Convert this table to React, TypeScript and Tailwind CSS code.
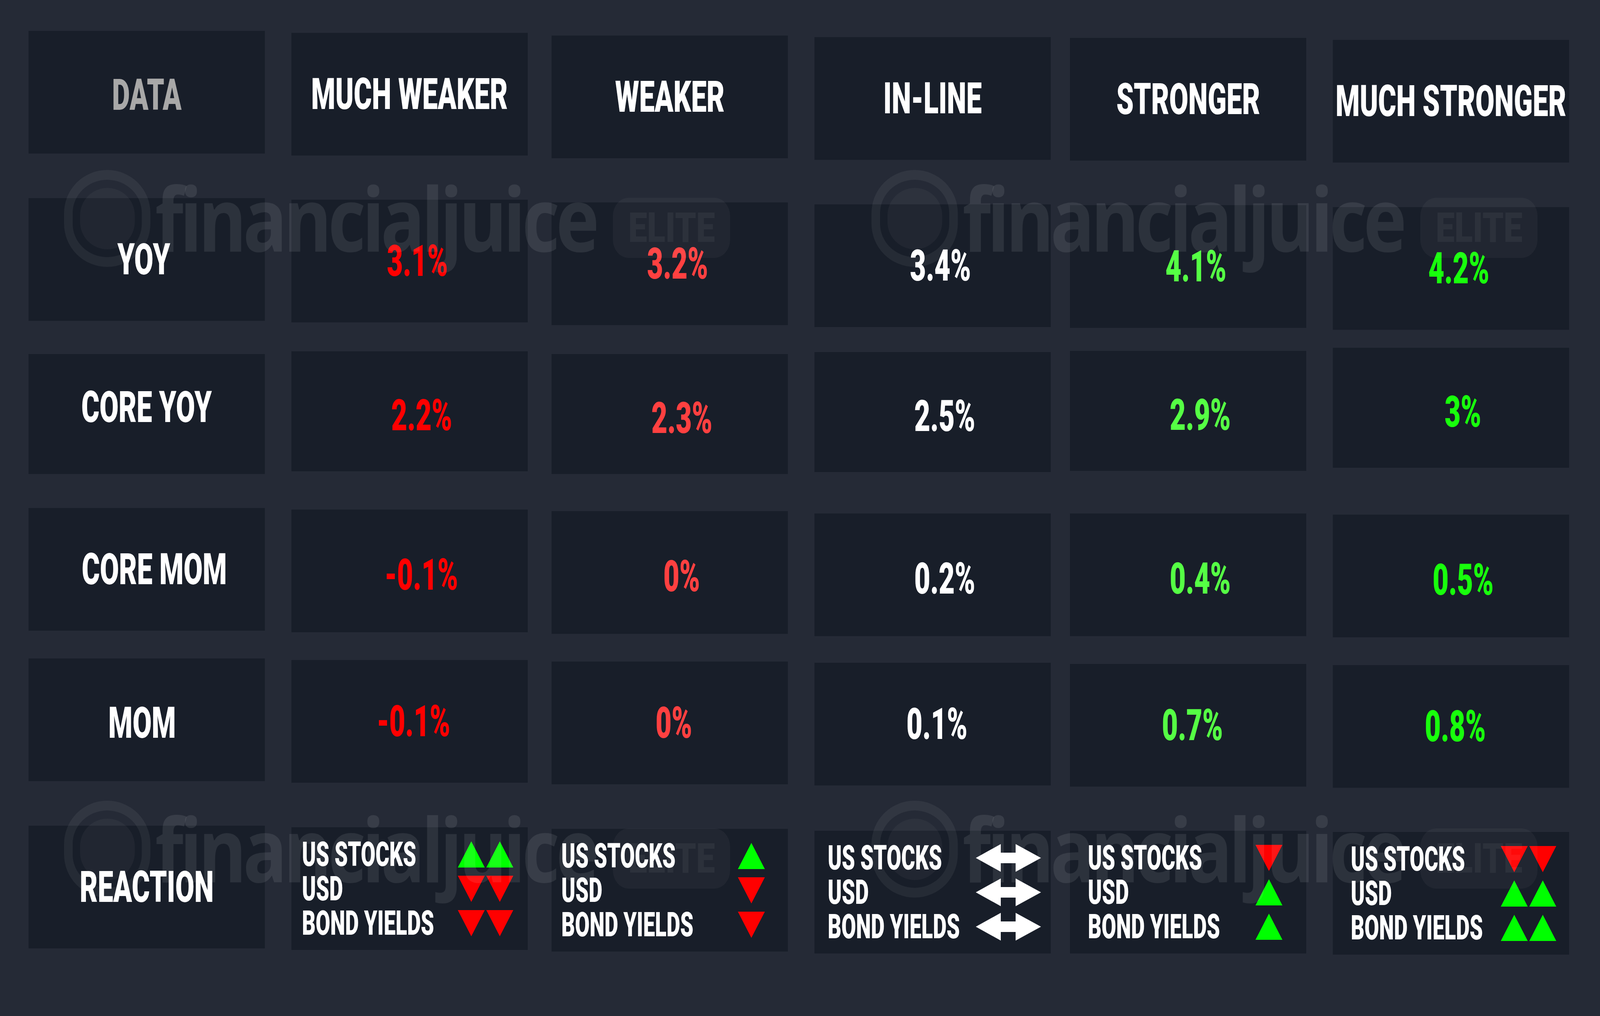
import React from "react";

type Mark = "up" | "down" | "flat";

// column spacing for the 4096px wide frame
const colMl = ["ml-[73px]", "ml-[68px]", "ml-[61px]", "ml-[68px]", "ml-[49px]", "ml-[68px]"];
const valueColors = ["text-[#ff0000]", "text-[#ff4040]", "text-white", "text-[#55ff44]", "text-[#18ff0c]"];

const rows = [
  {
    h: "h-[382px]",
    cellH: "h-[314px]",
    offs: ["mt-0", "mt-[4px]", "mt-[11px]", "mt-[16px]", "mt-[18px]", "mt-[23px]"],
    label: "YOY",
    labelPad: "pr-[14px]",
    valuePad: "pl-[39px]",
    values: ["3.1%", "3.2%", "3.4%", "4.1%", "4.2%"],
  },
  {
    h: "h-[411px]",
    cellH: "h-[307px]",
    offs: ["mt-[17px]", "mt-[10px]", "mt-[17px]", "mt-[12px]", "mt-[9px]", "mt-[1px]"],
    label: "CORE YOY",
    labelPad: "pb-[36px]",
    valuePad: "pl-[61px] pt-[20px]",
    values: ["2.2%", "2.3%", "2.5%", "2.9%", "3%"],
  },
  {
    h: "h-[385px]",
    cellH: "h-[314px]",
    offs: ["mt-0", "mt-[4px]", "mt-[8px]", "mt-[14px]", "mt-[14px]", "mt-[17px]"],
    label: "CORE MOM",
    labelPad: "pl-[39px]",
    valuePad: "pl-[61px] pt-[20px]",
    values: ["-0.1%", "0%", "0.2%", "0.4%", "0.5%"],
  },
  {
    h: "h-[428px]",
    cellH: "h-[314px]",
    offs: ["mt-0", "mt-[4px]", "mt-[8px]", "mt-[11px]", "mt-[14px]", "mt-[17px]"],
    label: "MOM",
    labelPad: "pr-[23px] pt-[16px]",
    valuePad: "pl-[21px]",
    values: ["-0.1%", "0%", "0.1%", "0.7%", "0.8%"],
  },
];

const headers = ["MUCH WEAKER", "WEAKER", "IN-LINE", "STRONGER", "MUCH STRONGER"];
const headerOffs = ["mt-0", "mt-[5px]", "mt-[12px]", "mt-[16px]", "mt-[18px]", "mt-[23px]"];
const reactionOffs = ["mt-0", "mt-[4px]", "mt-[8px]", "mt-[13px]", "mt-[13px]", "mt-[16px]"];

const reactions: { pad: string; marks: Mark[][] }[] = [
  { pad: "pl-[27px] pr-[37px]", marks: [["up", "up"], ["down", "down"], ["down", "down"]] },
  { pad: "pl-[25px] pr-[59px]", marks: [["up"], ["down"], ["down"]] },
  { pad: "pl-[34px] pr-[25px]", marks: [["flat"], ["flat"], ["flat"]] },
  { pad: "pl-[46px] pr-[61px]", marks: [["down"], ["up"], ["up"]] },
  { pad: "pl-[46px] pr-[33px]", marks: [["down", "down"], ["up", "up"], ["up", "up"]] },
];

const reactionLines = ["US STOCKS", "USD", "BOND YIELDS"];

function Big({ children, className = "" }: { children: React.ReactNode; className?: string }) {
  return (
    <span className={`inline-block whitespace-nowrap font-black text-[112px] leading-none scale-x-[0.632] ${className}`}>
      {children}
    </span>
  );
}

function MarkIcon({ kind }: { kind: Mark }) {
  if (kind === "flat") {
    return (
      <svg width="167" height="71" viewBox="0 0 167 71">
        <polygon points="0,35.5 64,0 64,22 102,22 102,0 167,35.5 102,71 102,49 64,49 64,71" fill="#ffffff" />
      </svg>
    );
  }
  return (
    <svg width="69" height="67" viewBox="0 0 69 67">
      {kind === "up" ? (
        <polygon points="34.5,0 69,67 0,67" fill="#00ff00" />
      ) : (
        <polygon points="0,0 69,0 34.5,67" fill="#ff0000" />
      )}
    </svg>
  );
}

function Watermark({ pos }: { pos: string }) {
  return (
    <div className={`absolute ${pos} w-[1710px] h-[250px]`}>
      <div className="absolute left-0 top-0 w-[221px] h-[248px] rounded-full border-x-[22px] border-y-[25px] border-white/[0.06] flex items-center justify-center">
        <div className="w-[140px] h-[157px] rounded-full bg-white/[0.04]" />
      </div>
      <span className="absolute left-[233px] top-[8px] inline-block origin-left scale-x-[0.83] whitespace-nowrap font-['Open_Sans',sans-serif] font-bold text-[226px] leading-none tracking-[-0.05em] text-white/[0.09]">
        financialjuice
      </span>
      <div className="absolute left-[1405px] top-[71px] w-[300px] h-[154px] rounded-[41px/46px] bg-white/[0.04] flex items-center justify-center">
        <span className="inline-block font-black text-[105px] leading-none text-white/[0.05] scale-x-[0.82]">ELITE</span>
      </div>
    </div>
  );
}

export default function App() {
  return (
    <div className="relative w-full h-[2600px] overflow-hidden bg-[#252a36] pt-[79px] font-[Roboto,sans-serif]">
      {/* header row */}
      <div className="flex items-start h-[428px]">
        {["DATA", ...headers].map((t, i) => (
          <div
            key={t}
            className={`w-[605px] h-[314px] shrink-0 bg-[#181e29] flex items-center justify-center ${colMl[i]} ${headerOffs[i]}`}
          >
            <Big className={i === 0 ? "text-[#a8a8a8] pt-[14px]" : "text-white"}>{t}</Big>
          </div>
        ))}
      </div>

      {/* data rows */}
      {rows.map((r) => (
        <div key={r.label} className={`flex items-start ${r.h}`}>
          <div
            className={`w-[605px] ${r.cellH} shrink-0 bg-[#181e29] flex items-center justify-center ${colMl[0]} ${r.offs[0]} ${r.labelPad}`}
          >
            <Big className="text-white">{r.label}</Big>
          </div>
          {r.values.map((v, i) => (
            <div
              key={i}
              className={`w-[605px] ${r.cellH} shrink-0 bg-[#181e29] flex items-center justify-center ${colMl[i + 1]} ${r.offs[i + 1]} ${r.valuePad}`}
            >
              <Big className={valueColors[i]}>{v}</Big>
            </div>
          ))}
        </div>
      ))}

      {/* reaction row */}
      <div className="flex items-start">
        <div className={`w-[605px] h-[314px] shrink-0 bg-[#181e29] flex items-center justify-center ${colMl[0]} ${reactionOffs[0]}`}>
          <Big className="text-white">REACTION</Big>
        </div>
        {reactions.map((rc, i) => (
          <div
            key={i}
            className={`w-[605px] h-[314px] shrink-0 bg-[#181e29] flex flex-col justify-center ${colMl[i + 1]} ${reactionOffs[i + 1]} ${rc.pad}`}
          >
            {reactionLines.map((line, j) => (
              <div key={line} className="flex items-center h-[88px]">
                <div className="flex-1 min-w-0">
                  <span className="inline-block origin-left whitespace-nowrap font-black text-[87px] leading-none text-white scale-x-[0.623]">
                    {line}
                  </span>
                </div>
                <div className="flex shrink-0 gap-[4px]">
                  {rc.marks[j].map((m, k) => (
                    <MarkIcon key={k} kind={m} />
                  ))}
                </div>
              </div>
            ))}
          </div>
        ))}
      </div>

      {/* watermark overlay */}
      <div className="pointer-events-none absolute inset-0">
        <Watermark pos="left-[164px] top-[435px]" />
        <Watermark pos="left-[2231px] top-[435px]" />
        <Watermark pos="left-[164px] top-[2049px]" />
        <Watermark pos="left-[2231px] top-[2049px]" />
      </div>
    </div>
  );
}
